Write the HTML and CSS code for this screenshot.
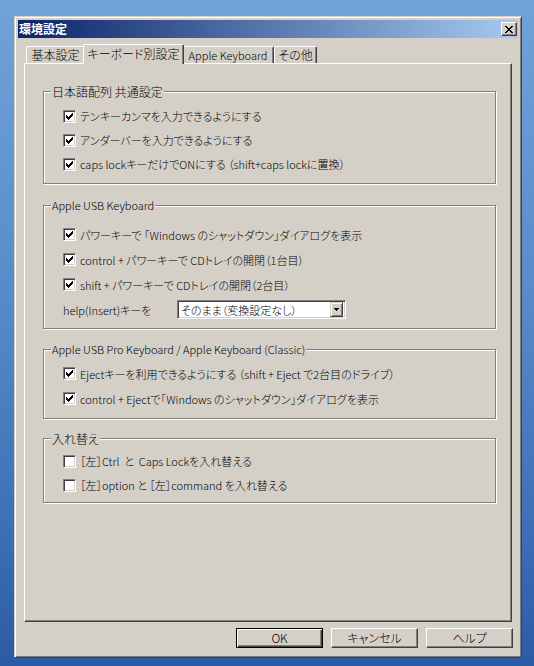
FILE: index.html
```html
<!DOCTYPE html>
<html lang="ja">
<head>
<meta charset="utf-8">
<title>環境設定</title>
<link rel="stylesheet" href="styles.css">
</head>
<body>
<div class="window">
  <div class="titlebar">
    <span class="title">環境設定</span>
    <span class="close"><svg width="8" height="7" viewBox="0 0 8 7"><path d="M0 0h2v1H0z M6 0h2v1H6z M1 1h2v1H1z M5 1h2v1H5z M2 2h4v1H2z M3 3h2v1H3z M2 4h4v1H2z M1 5h2v1H1z M5 5h2v1H5z M0 6h2v1H0z M6 6h2v1H6z" fill="#000"/></svg></span>
  </div>
  <div class="tabs">
    <div class="tab t1">基本設定</div>
    <div class="tab t2 active">キーボード別設定</div>
    <div class="tab t3">Apple Keyboard</div>
    <div class="tab t4">その他</div>
  </div>
  <div class="panel">
    <fieldset class="group g1">
      <legend>日本語配列 共通設定</legend>
      <div class="row"><span class="cb"><svg width="11" height="11" viewBox="1 1 11 11"><path d="M3 5h1v3H3z M4 6h1v3H4z M5 7h1v3H5z M6 6h1v3H6z M7 5h1v3H7z M8 4h1v3H8z M9 3h1v3H9z" fill="#000"/></svg></span><span class="txt">テンキーカンマを入力できるようにする</span></div>
      <div class="row"><span class="cb"><svg width="11" height="11" viewBox="1 1 11 11"><path d="M3 5h1v3H3z M4 6h1v3H4z M5 7h1v3H5z M6 6h1v3H6z M7 5h1v3H7z M8 4h1v3H8z M9 3h1v3H9z" fill="#000"/></svg></span><span class="txt">アンダーバーを入力できるようにする</span></div>
      <div class="row"><span class="cb"><svg width="11" height="11" viewBox="1 1 11 11"><path d="M3 5h1v3H3z M4 6h1v3H4z M5 7h1v3H5z M6 6h1v3H6z M7 5h1v3H7z M8 4h1v3H8z M9 3h1v3H9z" fill="#000"/></svg></span><span class="txt">caps lockキーだけでONにする （shift+caps lockに置換）</span></div>
    </fieldset>
    <fieldset class="group g2">
      <legend>Apple USB Keyboard</legend>
      <div class="row"><span class="cb"><svg width="11" height="11" viewBox="1 1 11 11"><path d="M3 5h1v3H3z M4 6h1v3H4z M5 7h1v3H5z M6 6h1v3H6z M7 5h1v3H7z M8 4h1v3H8z M9 3h1v3H9z" fill="#000"/></svg></span><span class="txt">パワーキーで 「Windows のシャットダウン」ダイアログを表示</span></div>
      <div class="row"><span class="cb"><svg width="11" height="11" viewBox="1 1 11 11"><path d="M3 5h1v3H3z M4 6h1v3H4z M5 7h1v3H5z M6 6h1v3H6z M7 5h1v3H7z M8 4h1v3H8z M9 3h1v3H9z" fill="#000"/></svg></span><span class="txt">control + パワーキーで CDトレイの開閉（1台目）</span></div>
      <div class="row"><span class="cb"><svg width="11" height="11" viewBox="1 1 11 11"><path d="M3 5h1v3H3z M4 6h1v3H4z M5 7h1v3H5z M6 6h1v3H6z M7 5h1v3H7z M8 4h1v3H8z M9 3h1v3H9z" fill="#000"/></svg></span><span class="txt">shift + パワーキーで CDトレイの開閉（2台目）</span></div>
      <div class="row help-row"><span class="label">help(Insert)キーを</span>
        <span class="select"><span class="val">そのまま（変換設定なし）</span><span class="arrow"><svg width="5" height="3" viewBox="0 0 5 3"><path d="M0 0h5v1H0z M1 1h3v1H1z M2 2h1v1H2z" fill="#000"/></svg></span></span>
      </div>
    </fieldset>
    <fieldset class="group g3">
      <legend>Apple USB Pro Keyboard / Apple Keyboard (Classic)</legend>
      <div class="row"><span class="cb"><svg width="11" height="11" viewBox="1 1 11 11"><path d="M3 5h1v3H3z M4 6h1v3H4z M5 7h1v3H5z M6 6h1v3H6z M7 5h1v3H7z M8 4h1v3H8z M9 3h1v3H9z" fill="#000"/></svg></span><span class="txt">Ejectキーを利用できるようにする （shift + Eject で2台目のドライブ）</span></div>
      <div class="row"><span class="cb"><svg width="11" height="11" viewBox="1 1 11 11"><path d="M3 5h1v3H3z M4 6h1v3H4z M5 7h1v3H5z M6 6h1v3H6z M7 5h1v3H7z M8 4h1v3H8z M9 3h1v3H9z" fill="#000"/></svg></span><span class="txt">control + Ejectで「Windows のシャットダウン」ダイアログを表示</span></div>
    </fieldset>
    <fieldset class="group g4">
      <legend>入れ替え</legend>
      <div class="row"><span class="cb"></span><span class="txt">［左］Ctrl&nbsp; と&nbsp; Caps Lockを入れ替える</span></div>
      <div class="row"><span class="cb"></span><span class="txt">［左］option と ［左］command を入れ替える</span></div>
    </fieldset>
  </div>
  <div class="buttons">
    <button class="btn default" type="button">OK</button>
    <button class="btn" type="button">キャンセル</button>
    <button class="btn" type="button">ヘルプ</button>
  </div>
</div>
</body>
</html>
```
FILE: styles.css
```css
* { box-sizing: border-box; }
html, body { margin: 0; padding: 0; }
body {
  width: 534px;
  height: 666px;
  overflow: hidden;
  background: linear-gradient(to bottom, #70a3d7 0%, #5a8ecb 40%, #3c6fb5 80%, #2b5ba4 100%);
  font-family: "Noto Sans CJK JP", sans-serif;
  font-size: 11px;
  font-weight: 300;
  font-feature-settings: "palt";
  color: #000;
}
.window {
  margin: 16px 0 0 14px;
  width: 508px;
  height: 642px;
  background: #d4d0c8;
  border: 1px solid;
  border-color: #d4d0c8 #404040 #404040 #d4d0c8;
  box-shadow: inset 1px 1px #fff, inset -1px -1px #808080;
  padding: 3px;
  display: flex;
  flex-direction: column;
}
.titlebar {
  flex: none;
  height: 18px;
  display: flex;
  align-items: center;
  justify-content: space-between;
  padding: 0 1px 0 1px;
  background: linear-gradient(to right, #0a246a, #a6caf0);
}
.title {
  color: #fff;
  font-weight: bold;
  font-size: 12px;
  line-height: 18px;
  font-feature-settings: normal;
}
.close {
  width: 16px;
  height: 14px;
  background: #d4d0c8;
  border: 1px solid;
  border-color: #fff #404040 #404040 #fff;
  box-shadow: inset -1px -1px #808080;
  display: flex;
  align-items: center;
  justify-content: center;
}
.close svg { display: block; }
.tabs {
  flex: none;
  height: 19px;
  margin-top: 6px;
  padding-left: 8px;
  display: flex;
  align-items: flex-end;
}
.tab {
  height: 17px;
  border: 1px solid;
  border-bottom: none;
  border-color: #fff #404040 #404040 #fff;
  border-radius: 2px 2px 0 0;
  box-shadow: inset -1px 0 #808080;
  background: #d4d0c8;
  display: flex;
  align-items: center;
  justify-content: center;
  white-space: nowrap;
  line-height: 1;
  font-size: 12px;
}
.t1 { width: 59px; }
.t2 { width: 97px; }
.t3 { width: 92px; font-size: 11px; }
.t4 { width: 43px; }
.tab.active {
  width: 101px;
  height: 20px;
  margin: 0 -2px -1px -2px;
  padding-bottom: 2px;
  position: relative;
  z-index: 1;
}
.panel {
  flex: none;
  height: 559px;
  margin: 0 6px;
  border: 1px solid;
  border-color: #fff #404040 #404040 #fff;
  box-shadow: inset -1px -1px #808080;
  padding: 0 15px 0 18px;
}
.group {
  margin: 0;
  padding: 0 0 0 7px;
  min-width: 0;
  border: 1px solid #808080;
  box-shadow: inset 1px 1px #fff, 1px 1px #fff;
}
.group legend {
  padding: 0 1px;
  height: 13px;
  line-height: 13px;
  background: #d4d0c8;
  white-space: nowrap;
}
.g1 legend { font-size: 12px; }
.g1 { margin-top: 21px; padding-top: 6px; padding-bottom: 7px; }
.g2 { margin-top: 15px; padding-top: 10px; padding-bottom: 6px; }
.g3 { margin-top: 14px; padding-top: 5px; padding-bottom: 7px; }
.g4 { margin-top: 13px; padding-top: 4px; padding-bottom: 5px; }
.g4 legend { font-size: 12px; }
.row {
  display: flex;
  align-items: center;
  height: 24px;
  margin-left: 12px;
  white-space: nowrap;
}
.g2 .row { height: 25px; }
.g3 .row { height: 25px; }
.cb {
  flex: none;
  width: 13px;
  height: 13px;
  margin-right: 4px;
  background: #fff;
  border: 1px solid;
  border-color: #808080 #fff #fff #808080;
  box-shadow: inset 1px 1px #404040, inset -1px -1px #d4d0c8;
}
.cb svg { display: block; }
.txt { line-height: 14px; }
.label { width: 114px; flex: none; }
.select {
  width: 169px;
  height: 19px;
  background: #fff;
  border: 1px solid;
  border-color: #808080 #fff #fff #808080;
  box-shadow: inset 1px 1px #404040, inset -1px -1px #d4d0c8;
  padding: 2px 2px 2px 3px;
  display: flex;
  align-items: center;
}
.select .val { flex: 1; line-height: 14px; }
.select .arrow {
  flex: none;
  width: 13px;
  height: 15px;
  background: #d4d0c8;
  border: 1px solid;
  border-color: #d4d0c8 #404040 #404040 #d4d0c8;
  box-shadow: inset 1px 1px #fff, inset -1px -1px #808080;
  display: flex;
  align-items: center;
  justify-content: center;
}
.select .arrow svg { display: block; }
.buttons {
  flex: none;
  margin-top: 6px;
  padding-right: 5px;
  display: flex;
  justify-content: flex-end;
  gap: 8px;
}
.btn {
  width: 87px;
  height: 20px;
  margin: 0;
  padding: 0;
  font: inherit;
  font-size: 12px;
  color: #000;
  background: #d4d0c8;
  border: 1px solid;
  border-color: #fff #404040 #404040 #fff;
  box-shadow: inset -1px -1px #808080;
  border-radius: 0;
  line-height: 16px;
}
.btn.default {
  border: 1px solid #000;
  box-shadow: inset 1px 1px #fff, inset -1px -1px #404040, inset -2px -2px #808080;
}
```
